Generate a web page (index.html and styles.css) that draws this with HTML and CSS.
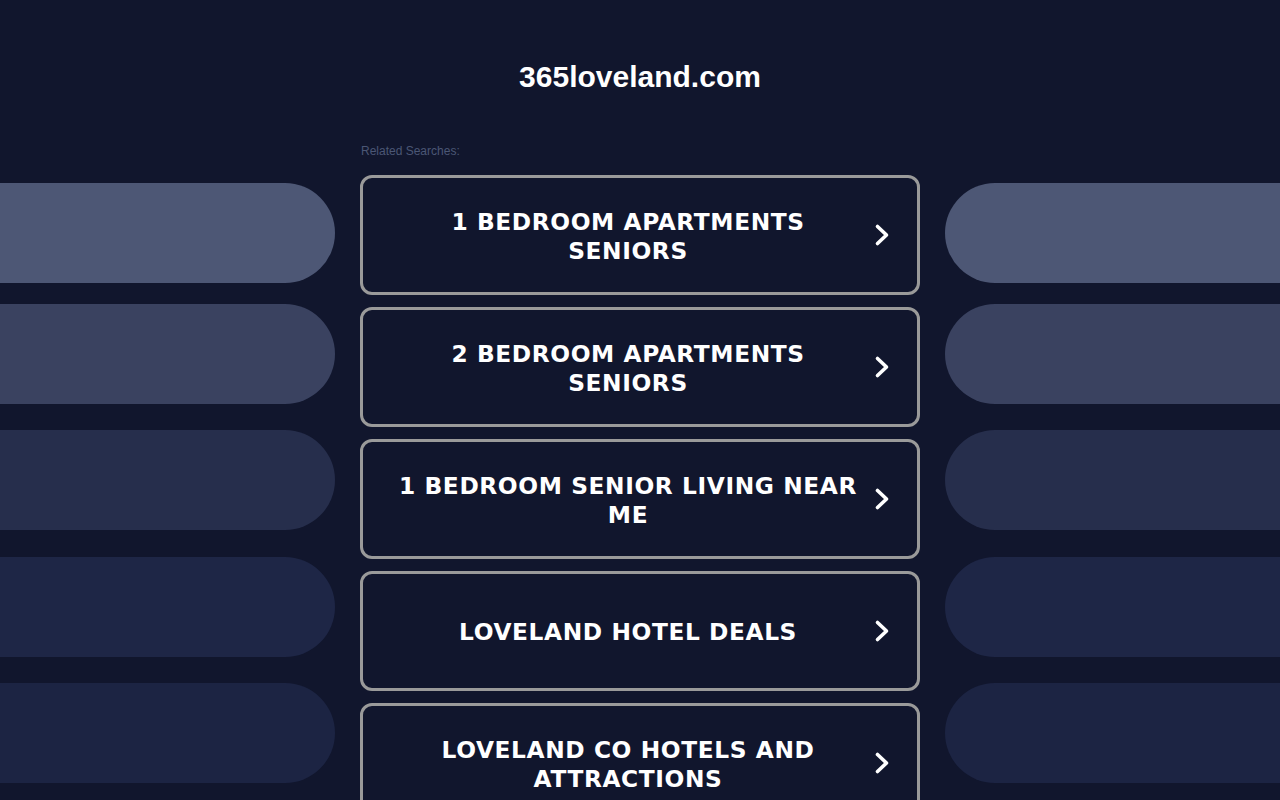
FILE: index.html
```html
<!DOCTYPE html>
<html lang="en">
<head>
<meta charset="utf-8">
<title>365loveland.com</title>
<link rel="stylesheet" href="styles.css">
</head>
<body>
<header class="header">
  <h1 class="title">365loveland.com</h1>
</header>
<main class="main">
  <div class="side side-left">
    <div class="bar bar-1"></div>
    <div class="bar bar-2"></div>
    <div class="bar bar-3"></div>
    <div class="bar bar-4"></div>
    <div class="bar bar-5"></div>
  </div>
  <div class="center">
    <div class="label">Related Searches:</div>
    <ul class="links">
      <li class="link"><span class="link-text">1 BEDROOM APARTMENTS SENIORS</span><svg class="chev" viewBox="0 0 16 24" width="16" height="24"><path d="M3.5 3.5 L12.5 12 L3.5 20.5"/></svg></li>
      <li class="link"><span class="link-text">2 BEDROOM APARTMENTS SENIORS</span><svg class="chev" viewBox="0 0 16 24" width="16" height="24"><path d="M3.5 3.5 L12.5 12 L3.5 20.5"/></svg></li>
      <li class="link"><span class="link-text">1 BEDROOM SENIOR LIVING NEAR ME</span><svg class="chev" viewBox="0 0 16 24" width="16" height="24"><path d="M3.5 3.5 L12.5 12 L3.5 20.5"/></svg></li>
      <li class="link"><span class="link-text">LOVELAND HOTEL DEALS</span><svg class="chev" viewBox="0 0 16 24" width="16" height="24"><path d="M3.5 3.5 L12.5 12 L3.5 20.5"/></svg></li>
      <li class="link"><span class="link-text">LOVELAND CO HOTELS AND ATTRACTIONS</span><svg class="chev" viewBox="0 0 16 24" width="16" height="24"><path d="M3.5 3.5 L12.5 12 L3.5 20.5"/></svg></li>
    </ul>
  </div>
  <div class="side side-right">
    <div class="bar bar-1"></div>
    <div class="bar bar-2"></div>
    <div class="bar bar-3"></div>
    <div class="bar bar-4"></div>
    <div class="bar bar-5"></div>
  </div>
</main>
</body>
</html>
```
FILE: styles.css
```css
html, body {
  margin: 0;
  padding: 0;
  background: #11162d;
  height: 800px;
  overflow: hidden;
}
body {
  font-family: "Liberation Sans", Arial, sans-serif;
  color: #fff;
}
.header {
  height: 140px;
  text-align: center;
}
.title {
  margin: 0;
  padding-top: 62px;
  font-size: 30px;
  line-height: 30px;
  font-weight: bold;
  color: #fff;
}
.main {
  display: flex;
  align-items: flex-start;
  gap: 25px;
}
.side {
  width: 335px;
  flex: 0 0 335px;
  padding-top: 43px;
  display: flex;
  flex-direction: column;
}
.bar {
  height: 100px;
}
.bar-1 { background: #4d5775; margin-bottom: 21px; }
.bar-2 { background: #3a4260; margin-bottom: 26px; }
.bar-3 { background: #262e4c; margin-bottom: 27px; }
.bar-4 { background: #1e2646; margin-bottom: 26px; }
.bar-5 { background: #1c2443; }
.side-left .bar { border-radius: 0 50px 50px 0; }
.side-right .bar { border-radius: 50px 0 0 50px; }
.center {
  width: 560px;
  flex: 0 0 560px;
}
.label {
  margin-top: 4px;
  padding-left: 1px;
  font-size: 12px;
  line-height: 14px;
  color: #4b5675;
  margin-bottom: 17px;
}
.links {
  list-style: none;
  margin: 0;
  padding: 0;
}
.link {
  box-sizing: border-box;
  height: 120px;
  margin-bottom: 12px;
  border: 3px solid #9a9a9a;
  border-radius: 12px;
  display: flex;
  align-items: center;
  padding-left: 30px;
}
.link-text {
  flex: 0 0 470px;
  text-align: center;
  font-family: "DejaVu Sans", Verdana, sans-serif;
  font-weight: bold;
  font-size: 23.3px;
  line-height: 29px;
  letter-spacing: 0.6px;
  color: #fff;
  padding-top: 1px;
}
.chev {
  flex: 0 0 16px;
  margin-left: 11px;
  margin-right: 27px;
  margin-top: 0;
  fill: none;
  stroke: #fff;
  stroke-width: 3.6;
  stroke-linecap: round;
  stroke-linejoin: round;
}
```
